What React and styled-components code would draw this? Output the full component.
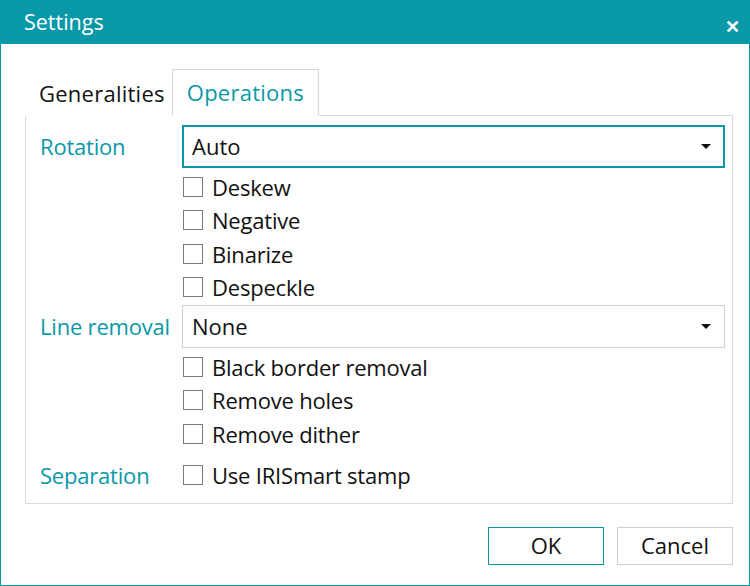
import React, { useState } from 'react';
import styled, { createGlobalStyle } from 'styled-components';

const TEAL = '#0898a8';

const Global = createGlobalStyle`
	html, body { margin: 0; padding: 0; background: #fff; }
	body { font-family: "Open Sans", "Noto Sans", sans-serif; }
	* { box-sizing: border-box; }
`;

const Window = styled.div`
	width: 750px;
	height: 586px;
	border: 1px solid ${TEAL};
	display: flex;
	flex-direction: column;
	background: #fff;
	overflow: hidden;
`;

const TitleBar = styled.div`
	height: 43px;
	background: ${TEAL};
	color: #fff;
	display: flex;
	align-items: center;
	justify-content: space-between;
	padding: 0 9px 0 23px;
	font-size: 21.5px;
	flex-shrink: 0;
	span:first-child { margin-top: -3px; }
`;

const Close = styled.span`
	font-size: 18px;
	font-weight: 700;
	margin-top: 6px;
`;

const Body = styled.div`
	padding: 24px 16px 0 24px;
	display: flex;
	flex-direction: column;
	flex: 1;
`;

const Tabs = styled.div`
	display: flex;
	align-items: flex-end;
	height: 47px;
	position: relative;
	z-index: 1;
`;

const Tab = styled.div`
	height: ${(p) => (p.$active ? '47px' : '44px')};
	padding: ${(p) => (p.$active ? '0 14px 2px 14px' : '0 6px 2px 13px')};
	display: flex;
	align-items: center;
	font-size: 22px;
	letter-spacing: 0.25px;
	color: ${(p) => (p.$active ? TEAL : '#111')};
	border: 1px solid ${(p) => (p.$active ? '#d6d6d6' : 'transparent')};
	border-bottom: 1px solid ${(p) => (p.$active ? '#fff' : 'transparent')};
	background: #fff;
	margin-bottom: -1px;
`;

const Panel = styled.div`
	border: 1px solid #d9d9d9;
	height: 389px;
	padding: 9px 7px 0 14px;
	display: grid;
	grid-template-columns: 142px 1fr;
	align-content: start;
`;

const Label = styled.div`
	color: ${TEAL};
	font-size: 22px;
	letter-spacing: -0.2px;
	display: flex;
	align-items: center;
	height: ${(p) => p.$h || 'auto'};
	padding-bottom: 2px;
	white-space: nowrap;
`;

const Combo = styled.div`
	height: 43px;
	border: ${(p) => (p.$focus ? `2px solid ${TEAL}` : '1px solid #d0d0d0')};
	padding: 0 ${(p) => (p.$focus ? '12px' : '13px')} 2px ${(p) => (p.$focus ? '8px' : '9px')};
	display: flex;
	align-items: center;
	justify-content: space-between;
	font-size: 22px;
	color: #111;
`;

const Arrow = styled.span`
	width: 0;
	height: 0;
	margin-top: 2px;
	border-left: 5px solid transparent;
	border-right: 5px solid transparent;
	border-top: 5px solid #111;
`;

const Checks = styled.div`
	display: flex;
	flex-direction: column;
	padding: ${(p) => (p.$flat ? '0' : '3px 0 0')};
	padding-left: 1px;
`;

const CheckRow = styled.label`
	display: flex;
	align-items: center;
	height: ${(p) => p.$h || '33.5px'};
	font-size: 22px;
	letter-spacing: -0.2px;
	color: #111;
	gap: 9px;
	padding-bottom: 2px;
	cursor: default;
`;

const Box = styled.span`
	width: 20px;
	height: 20px;
	border: 1.5px solid #7a7a7a;
	background: #fff;
	flex-shrink: 0;
`;

const Footer = styled.div`
	display: flex;
	justify-content: flex-end;
	gap: 13px;
	padding-top: 23px;
`;

const Button = styled.button`
	width: 116px;
	height: 38px;
	background: #fff;
	border: 1px solid ${(p) => (p.$primary ? TEAL : '#cfcfcf')};
	font-family: inherit;
	font-size: 22px;
	color: #111;
	padding: 0 0 2px;
`;

const Check = ({ children, h }) => (
	<CheckRow $h={h}>
		<Box />
		{children}
	</CheckRow>
);

export default function App() {
	const [tab] = useState('ops');
	return (
		<Window>
			<Global />
			<TitleBar>
				<span>Settings</span>
				<Close>✕</Close>
			</TitleBar>
			<Body>
				<Tabs>
					<Tab $active={tab === 'gen'}>Generalities</Tab>
					<Tab $active={tab === 'ops'}>Operations</Tab>
				</Tabs>
				<Panel>
					<Label $h="43px">Rotation</Label>
					<Combo $focus>
						Auto
						<Arrow />
					</Combo>
					<div />
					<Checks>
						<Check>Deskew</Check>
						<Check>Negative</Check>
						<Check>Binarize</Check>
						<Check>Despeckle</Check>
					</Checks>
					<Label $h="43px">Line removal</Label>
					<Combo>
						None
						<Arrow />
					</Combo>
					<div />
					<Checks>
						<Check>Black border removal</Check>
						<Check>Remove holes</Check>
						<Check>Remove dither</Check>
					</Checks>
					<Label $h="48px">Separation</Label>
					<Checks $flat>
						<Check h="48px">Use IRISmart stamp</Check>
					</Checks>
				</Panel>
				<Footer>
					<Button $primary>OK</Button>
					<Button>Cancel</Button>
				</Footer>
			</Body>
		</Window>
	);
}
